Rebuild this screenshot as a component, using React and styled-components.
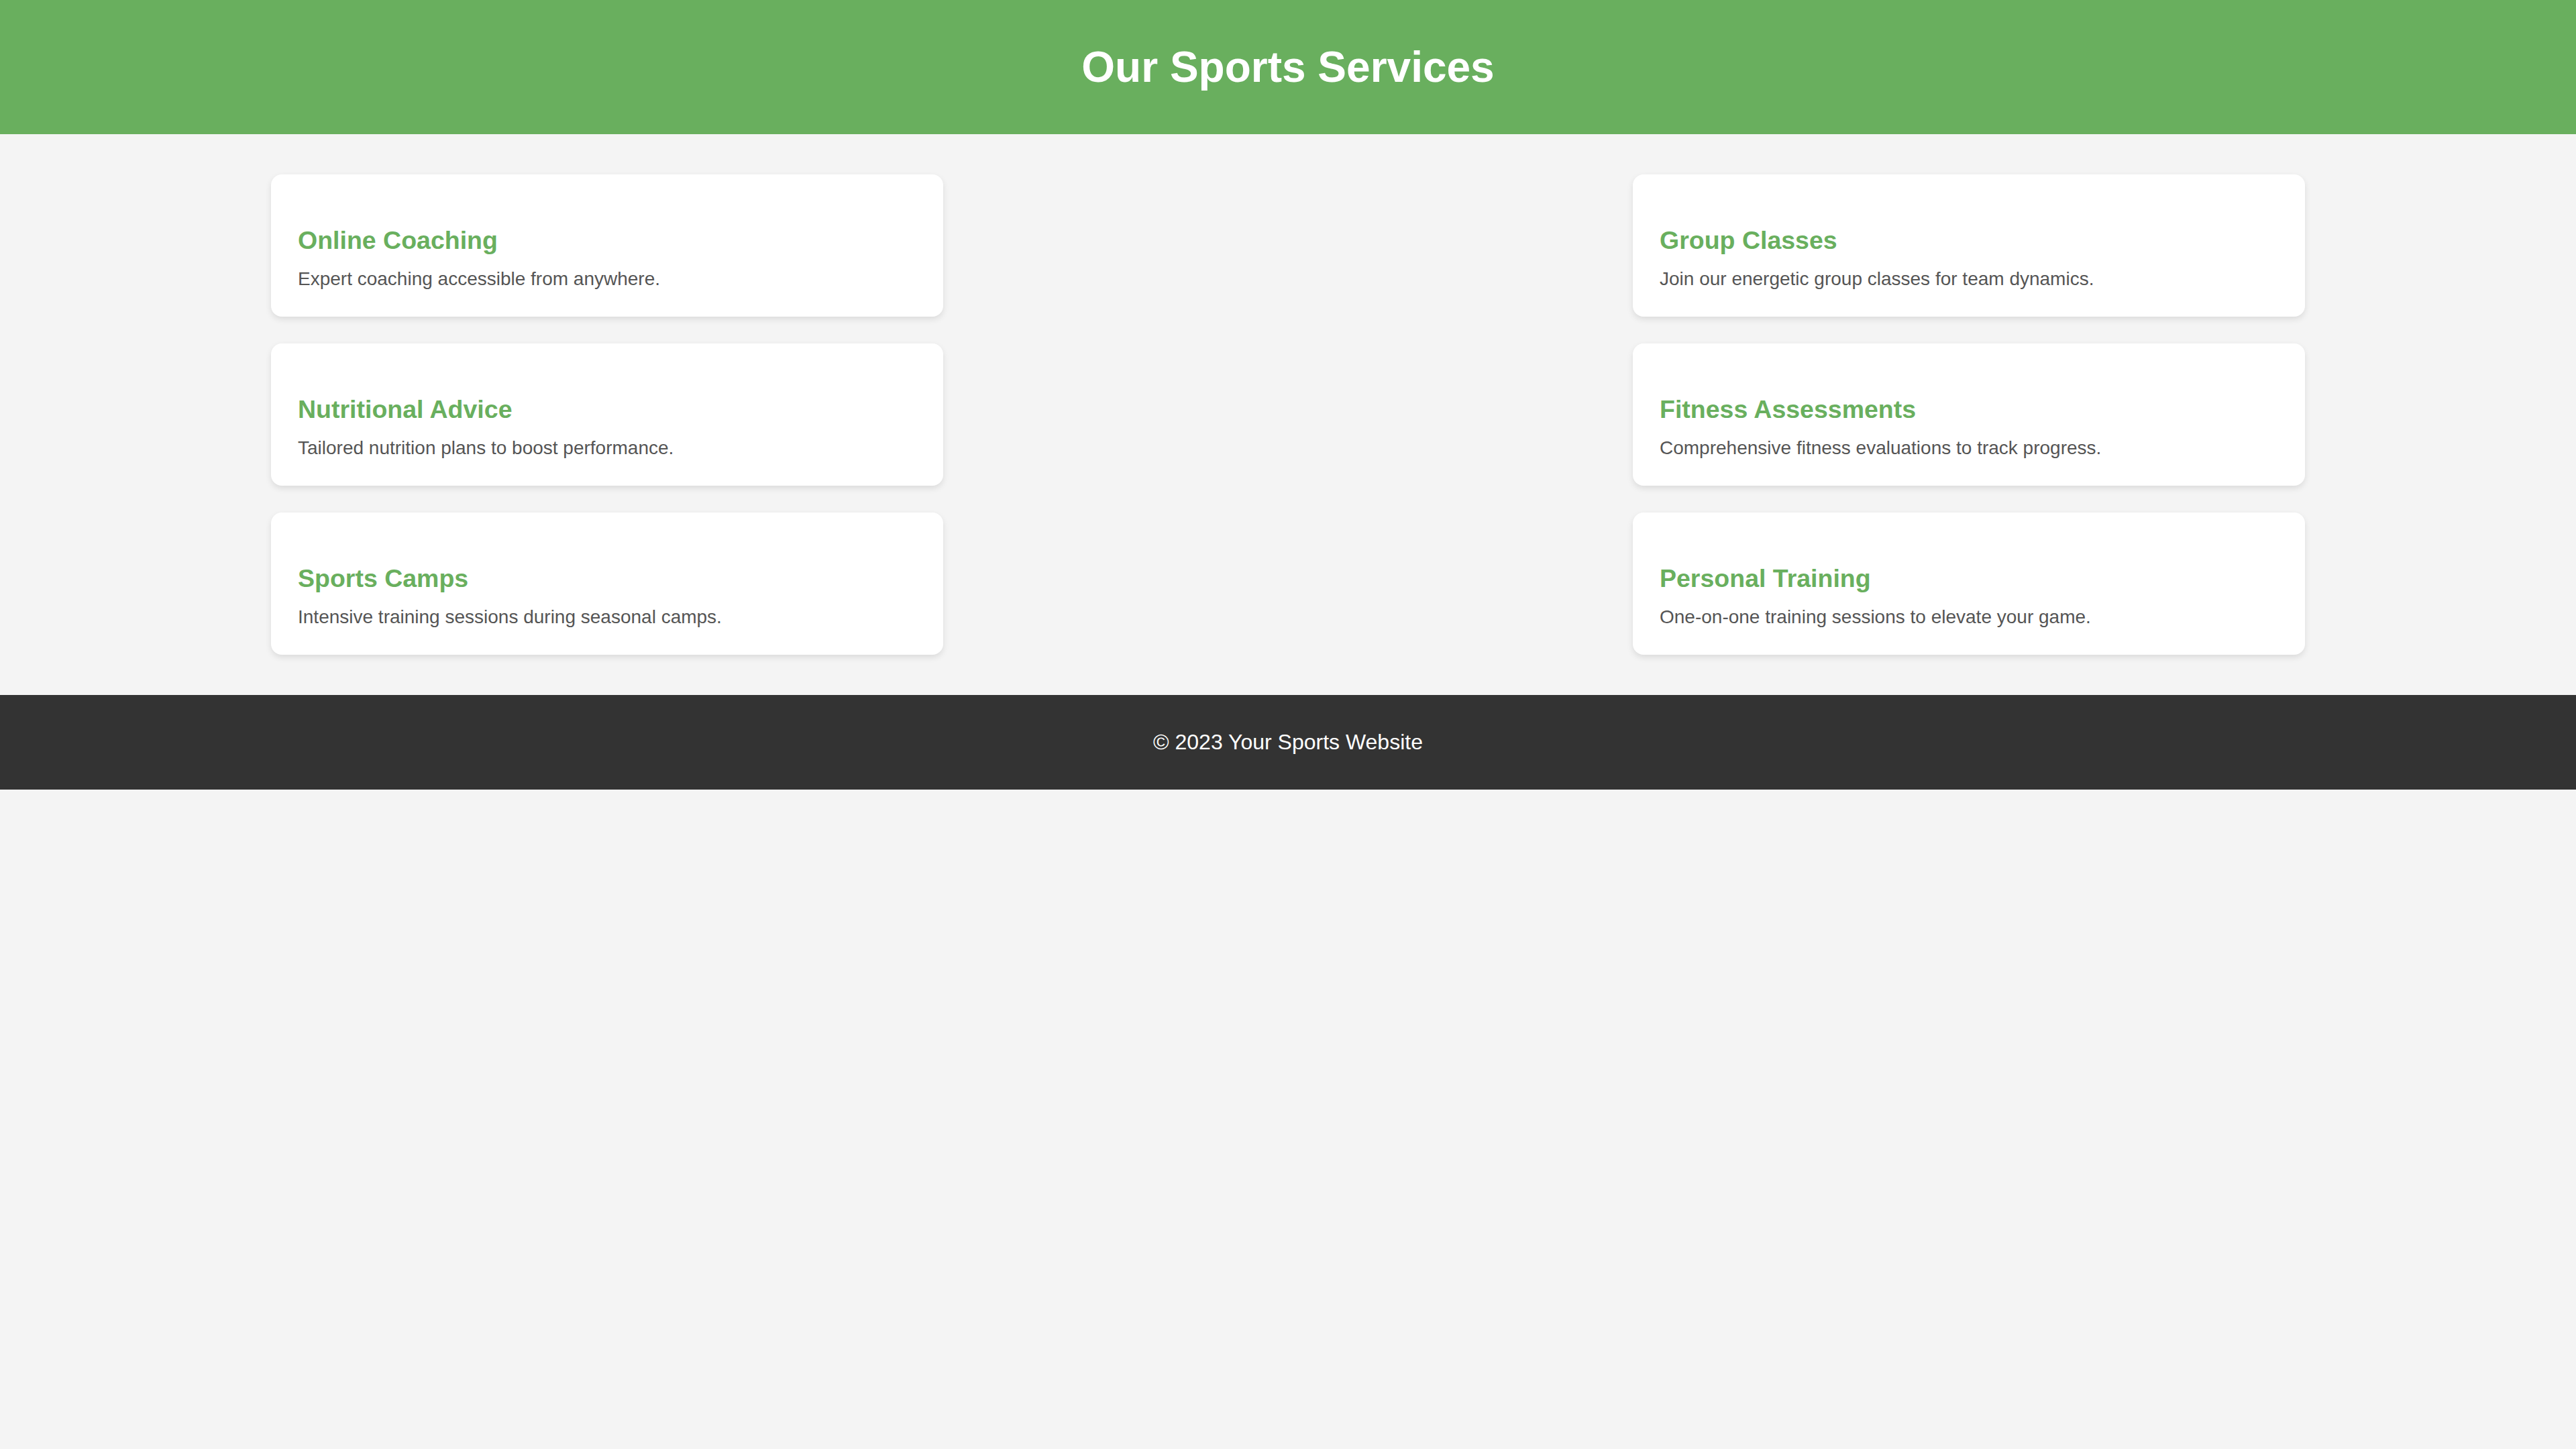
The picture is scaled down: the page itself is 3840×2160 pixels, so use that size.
import React from "react";
import styled, { createGlobalStyle } from "styled-components";

const GlobalStyle = createGlobalStyle`
  html, body {
    margin: 0;
    padding: 0;
    background: #f4f4f4;
    font-family: "Liberation Sans", Arial, Helvetica, sans-serif;
  }
`;

const Header = styled.header`
  background: #69af5e;
  color: #ffffff;
  padding: 20px;
  text-align: center;
`;

const Title = styled.h1`
  margin: 43px 0;
  font-size: 64px;
  font-weight: 700;
  line-height: normal;
`;

const Services = styled.main`
  max-width: 3032px;
  margin: 60px auto;
  display: grid;
  grid-template-columns: repeat(2, 1002px);
  justify-content: space-between;
  row-gap: 40px;
`;

const Card = styled.section`
  background: #ffffff;
  border-radius: 16px;
  box-shadow: 0 4px 10px rgba(0, 0, 0, 0.1);
  padding: 40px;
`;

const CardTitle = styled.h3`
  margin: 37px 0 20px;
  color: #69af5e;
  font-size: 37.5px;
  font-weight: 700;
  line-height: normal;
`;

const CardText = styled.p`
  margin: 0;
  color: #555555;
  font-size: 28px;
  line-height: normal;
`;

const Footer = styled.footer`
  background: #333333;
  color: #ffffff;
  padding: 20px;
  text-align: center;
`;

const FooterText = styled.p`
  margin: 32px 0;
  font-size: 32px;
  line-height: normal;
`;

const services = [
  { title: "Online Coaching", text: "Expert coaching accessible from anywhere." },
  { title: "Group Classes", text: "Join our energetic group classes for team dynamics." },
  { title: "Nutritional Advice", text: "Tailored nutrition plans to boost performance." },
  { title: "Fitness Assessments", text: "Comprehensive fitness evaluations to track progress." },
  { title: "Sports Camps", text: "Intensive training sessions during seasonal camps." },
  { title: "Personal Training", text: "One-on-one training sessions to elevate your game." },
];

export default function App() {
  return (
    <>
      <GlobalStyle />
      <Header>
        <Title>Our Sports Services</Title>
      </Header>
      <Services>
        {services.map((s) => (
          <Card key={s.title}>
            <CardTitle>{s.title}</CardTitle>
            <CardText>{s.text}</CardText>
          </Card>
        ))}
      </Services>
      <Footer>
        <FooterText>© 2023 Your Sports Website</FooterText>
      </Footer>
    </>
  );
}
